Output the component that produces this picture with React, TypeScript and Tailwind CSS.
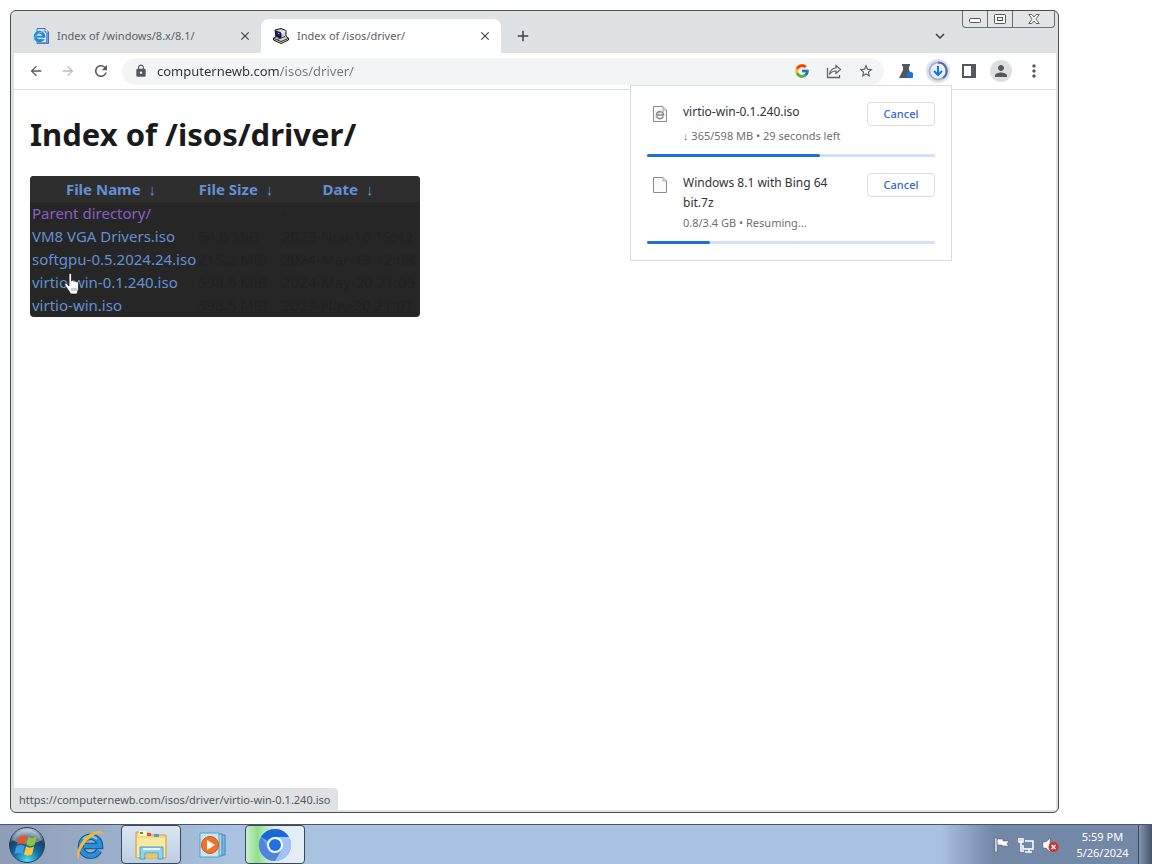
import type { ReactNode } from "react";
import { FcGoogle } from "react-icons/fc";
import {
  MdAdd,
  MdArrowBack,
  MdArrowForward,
  MdClose,
  MdExpandMore,
  MdLock,
  MdMoreVert,
  MdPerson,
  MdRefresh,
  MdStarBorder,
} from "react-icons/md";

const files = [
  { name: "Parent directory/", size: "-", date: "-", visited: true },
  { name: "VM8 VGA Drivers.iso", size: "54.6 MiB", date: "2023-Nov-16 19:42" },
  { name: "softgpu-0.5.2024.24.iso", size: "215.2 MiB", date: "2024-Mar-13 12:08" },
  { name: "virtio-win-0.1.240.iso", size: "598.5 MiB", date: "2024-May-20 21:05" },
  { name: "virtio-win.iso", size: "598.5 MiB", date: "2023-Nov-20 21:07" },
];

function SiteIcon() {
  return (
    <svg viewBox="0 0 16 16" className="size-4 shrink-0">
      <path d="M4 .5h8l3.500 3.500v11.500H4z" fill="#cfdff5" stroke="#4a6fb5" />
      <path d="M12 .5V4h3.500" fill="#fff" stroke="#4a6fb5" />
      <path d="M14 5v10H5" fill="none" stroke="#5c7fc4" strokeWidth="1.500" />
      <circle cx="6.500" cy="8.500" r="4.300" fill="#bfe6fb" stroke="#2487d0" strokeWidth="3" />
      <path d="M3.500 8.700h7" stroke="#2487d0" strokeWidth="1.800" />
      <path d="M8.500 10.500h4" stroke="#d8ecfa" strokeWidth="1.300" />
      <path d="M1 13C-.5 10 6 3 11 4" fill="none" stroke="#7cc3ee" />
    </svg>
  );
}

function ComputerIcon() {
  return (
    <svg viewBox="0 0 16 16" className="size-4 shrink-0">
      <path d="M2 2l6-1.500 5 2v6l2.500 1.500v2L8 15.500.500 12v-2L3 9z" fill="#d4d4d4" stroke="#111" />
      <path d="M3 3l5 2v5L3 8.500z" fill="#15158c" stroke="#111" />
      <path d="M8 5l4.500-2" stroke="#fff" />
      <path d="M1 10.500l7 3 7-3M4 11.500l8-3" fill="none" stroke="#333" />
      <path d="M4.500 5l2 1" stroke="#7db8ff" />
    </svg>
  );
}

function ShareIcon() {
  return (
    <svg viewBox="0 0 16 16" className="size-4" fill="none" stroke="#5f6368">
      <path d="M1.500 5v9.500h12V12" strokeWidth="1.300" />
      <path d="M10 2.500l4.500 4-4.500 4V8C7 8 5 9 3.500 11.500 4 8 6 5.300 10 5z" strokeWidth="1.200" />
    </svg>
  );
}

function FlaskIcon() {
  return (
    <svg viewBox="0 0 16 16" className="size-4">
      <path d="M4 1h8v2h-1v4l4 8H1l4-8V3H4z" fill="#54575c" />
      <circle cx="12" cy="12" r="3.200" fill="#1a73e8" />
    </svg>
  );
}

function DownloadIcon() {
  return (
    <svg viewBox="0 0 24 24" className="size-6">
      <circle cx="12" cy="12" r="8.500" fill="#e6eefc" stroke="#a9b3c8" strokeWidth="2" />
      <path d="M12 3.500A8.500 8.500 0 0 1 17 19" fill="none" stroke="#4a6ea8" strokeWidth="2" />
      <path d="M12 7v9M8 12l4 4 4-4" fill="none" stroke="#1a73e8" strokeWidth="2" />
    </svg>
  );
}

function FileIcon({ disc }: { disc?: boolean }) {
  return (
    <svg viewBox="0 0 14 16" className="h-4 w-[14px] shrink-0">
      <path d="M.5.5h9.500l3.500 3.500v11.500H.5z" fill="#fafafa" stroke="#8a8a8a" />
      <path d="M10 .5V4h3.500" fill="#ddd" stroke="#aaa" />
      {disc && (
        <>
          <path d="M10.300 10.500A3.600 3.600 0 1 1 10.600 9H4" fill="none" stroke="#888" strokeWidth="1.500" />
          <path d="M3 12c0-3 4-7 8-7" fill="none" stroke="#aaa" />
        </>
      )}
    </svg>
  );
}

function StartOrb() {
  return (
    <svg viewBox="0 0 38 38" className="size-[38px]">
      <defs>
        <radialGradient id="orb" cx=".5" cy=".95" r=".9">
          <stop offset="0" stopColor="#4fdcf5" />
          <stop offset=".4" stopColor="#1673a8" />
          <stop offset=".75" stopColor="#1d3f63" />
          <stop offset="1" stopColor="#a9bccb" />
        </radialGradient>
      </defs>
      <circle cx="19" cy="19" r="17.500" fill="url(#orb)" stroke="#26425d" />
      <path d="M4 14a16 16 0 0 1 30 0c-8 5-20 5-30 0z" fill="#fff" opacity=".35" />
      <path d="M11 11c3-2 5-2 8-.5l-2 8c-3-1.500-5-1.500-8 0z" fill="#e8552b" />
      <path d="M20.500 11c3 1.500 5 1.500 8 0l-2 8c-3 1.500-5 1.500-8 0z" fill="#8cc63f" />
      <path d="M8.500 20c3-1.500 5-1.500 8 0l-2 8c-3-1.500-5-1.500-8 0z" fill="#3b9fe6" />
      <path d="M18 20.500c3 1.500 5 1.500 8 0l-2 8c-3 1.500-5 1.500-8 0z" fill="#fdc82f" />
    </svg>
  );
}

function InternetExplorerIcon() {
  return (
    <svg viewBox="0 0 32 32" className="size-8" fill="none">
      <path d="M25 21.500A9.500 9.500 0 1 1 26 17H10" stroke="#14538f" strokeWidth="6.500" />
      <path d="M25 21.500A9.500 9.500 0 1 1 26 17H10" stroke="#2b8fd6" strokeWidth="4.500" />
      <path d="M9 10a10 10 0 0 1 14 0" stroke="#7ccdf5" strokeWidth="2" />
      <path d="M5 30C-1 26 8 7 20 3c5-2 9-1 9 2-2-2-6-1-10 2C10 13 4 23 5 30z" fill="#f6b92c" />
    </svg>
  );
}

function ExplorerIcon() {
  return (
    <svg viewBox="0 0 34 32" className="h-8 w-[34px]">
      <path d="M2 3h11l2 3h17v23H2z" fill="#f2d77c" stroke="#c8a545" />
      <path d="M5 2h8v5H5z" fill="#fff5c8" />
      <path d="M6 3h3v2H6z" fill="#3f9f45" />
      <path d="M13 4h4v3h-4z" fill="#dc5136" />
      <path d="M20 5h5v3h-5z" fill="#589bd6" />
      <path d="M3 9h28v19H3z" fill="#fae99e" />
      <path d="M6 18h23v12h-5v-6H11v6H6z" fill="#8ed2f0" stroke="#4a9bd1" />
      <path d="M9 20h17" stroke="#e3f6ff" strokeWidth="2" />
      <path d="M12 25h11v4H12z" fill="#f1c453" />
    </svg>
  );
}

function MediaPlayerIcon() {
  return (
    <svg viewBox="0 0 28 26" className="h-[26px] w-7">
      <path d="M8 3h18v20H8z" fill="#7ab9dd" stroke="#4286b4" />
      <path d="M5 2h18v22H5z" fill="#a5d6ee" stroke="#4286b4" />
      <path d="M1 1h19v24H1z" fill="#c4e6f5" stroke="#5a9ec9" />
      <circle cx="11" cy="13" r="8.500" fill="#f27321" stroke="#d3550f" />
      <path d="M8 8l8 5-8 5z" fill="#fff" />
    </svg>
  );
}

function ChromiumIcon() {
  return (
    <svg viewBox="0 0 34 34" className="size-[34px]">
      <circle cx="17" cy="17" r="16" fill="#669df6" />
      <path d="M17 17L3.100 9A16 16 0 0 1 30.900 9z" fill="#1a67d8" />
      <path d="M17 9h13.900A16 16 0 0 1 17 33l7-12z" fill="#a3c2f8" />
      <path d="M3.100 9A16 16 0 0 0 17 33l7-12-14-1z" fill="#4f86dc" />
      <circle cx="17" cy="17" r="8" fill="#fff" />
      <circle cx="17" cy="17" r="6" fill="#1f70e6" />
    </svg>
  );
}

function HandCursor() {
  return (
    <svg viewBox="0 0 17 22" className="pointer-events-none absolute left-[64px] top-[273px] h-[22px] w-[17px]">
      <path
        d="M5 1.500c0-1.300 2.500-1.300 2.500 0V8c.5-1 2.200-.8 2.400.4.600-.8 2.200-.6 2.400.6.700-.7 2.200-.2 2.200 1V15c0 2-1 3-1.500 6H6.500C6 18 1 14 .7 11.500c-.2-1.500 1.600-1.700 2.500-.5L5 13z"
        fill="#fff"
        stroke="#222"
        strokeWidth=".8"
      />
      <path d="M8 15v3M10 15v3M12 15v3" stroke="#555" strokeWidth=".6" />
    </svg>
  );
}

function Tab({ icon, title, active }: { icon: ReactNode; title: string; active?: boolean }) {
  return (
    <div
      className={
        active
          ? "flex h-[34px] w-60 items-center gap-2 rounded-t-lg bg-white pl-3 pr-2"
          : "flex h-[34px] w-60 items-center gap-2 pl-3 pr-2"
      }
    >
      {icon}
      <span className="flex-1 truncate text-[11px] text-[#5c6065]">{title}</span>
      <button aria-label={`Close ${title}`} className="flex size-4 items-center justify-center text-[#3c4043]">
        <MdClose size={14} />
      </button>
    </div>
  );
}

type DownloadProps = {
  icon: ReactNode;
  name: string;
  status: string;
  percent: number;
};

function Download({ icon, name, status, percent }: DownloadProps) {
  return (
    <div>
      <div className="flex items-start">
        <div className="w-9 pl-[6px] pt-1">{icon}</div>
        <div className="w-40">
          <p className="text-[12px] leading-5 text-[#303236]">{name}</p>
        </div>
        <button className="ml-auto h-6 w-[68px] rounded border border-[#dadce0] text-[11px] font-medium text-[#3568cf]">
          Cancel
        </button>
      </div>
      <p className="pl-9 text-[11px] leading-5 text-[#6b6f74]">{status}</p>
      <div className="mt-2 h-[3px] rounded-full bg-[#d3e0fa]">
        <div className="h-full rounded-full bg-[#1f6fd6]" style={{ width: `${percent}%` }} />
      </div>
    </div>
  );
}

function WindowControls() {
  return (
    <div className="absolute right-[3px] top-0 flex h-[17px] w-[93px] divide-x divide-[#6b6e72] rounded-b border border-t-0 border-[#6b6e72] bg-[#e3e5e8]">
      <button aria-label="Minimize" className="flex w-[25px] items-center justify-center">
        <svg viewBox="0 0 12 10" className="h-[10px] w-3">
          <rect x=".5" y="4.500" width="11" height="4" rx="1" fill="#fff" stroke="#555" />
        </svg>
      </button>
      <button aria-label="Restore" className="flex w-[25px] items-center justify-center">
        <svg viewBox="0 0 12 10" className="h-[10px] w-3" fill="#fff" stroke="#555">
          <rect x=".5" y=".5" width="11" height="9" rx="1" />
          <rect x="3.500" y="3.500" width="5" height="3" />
        </svg>
      </button>
      <button aria-label="Close" className="flex flex-1 items-center justify-center">
        <svg viewBox="0 0 12 10" className="h-[10px] w-3">
          <path d="M.8.5h3L6 3l2.200-2.500h3L7.800 5l3.400 4.500h-3L6 7 3.800 9.500h-3L4.200 5z" fill="#fff" stroke="#555" strokeWidth=".9" />
        </svg>
      </button>
    </div>
  );
}

function Toolbar() {
  return (
    <div className="flex h-[37px] items-center border-b border-[#dadce0] bg-white pl-[14px] pr-3 text-[#54575c]">
      <div className="flex items-center gap-4">
        <button aria-label="Back">
          <MdArrowBack size={20} className="w-4" />
        </button>
        <button aria-label="Forward" className="text-[#babcbe]">
          <MdArrowForward size={20} className="w-4" />
        </button>
        <button aria-label="Reload">
          <MdRefresh size={20} className="w-[18px]" />
        </button>
      </div>
      <div className="ml-3 flex h-[27px] flex-1 items-center rounded-full bg-[#f3f4f5] pl-3 pr-[10px]">
        <MdLock size={14} />
        <label htmlFor="address" className="sr-only">
          Address
        </label>
        {/* host is darker than the path */}
        <input
          id="address"
          defaultValue="computernewb.com/isos/driver/"
          className="ml-[9px] block min-w-0 flex-1 bg-linear-to-r from-[#303337] from-[122px] to-[#74787d] to-[122px] bg-clip-text text-[13px] leading-6 text-transparent outline-none"
        />
        <div className="flex items-center gap-4">
          <button aria-label="Search with Google">
            <FcGoogle size={16} />
          </button>
          <button aria-label="Share">
            <ShareIcon />
          </button>
          <button aria-label="Bookmark">
            <MdStarBorder size={18} className="w-4" />
          </button>
        </div>
      </div>
      <div className="ml-[14px] flex items-center gap-3">
        <button aria-label="Labs">
          <FlaskIcon />
        </button>
        <button aria-label="Downloads" className="rounded-full bg-[#dfe1e5]">
          <DownloadIcon />
        </button>
        <button aria-label="Side panel" className="mr-[2px]">
          <svg viewBox="0 0 14 14" className="size-[14px]">
            <path d="M1 1h12v12H1z" fill="#fff" stroke="#54575c" strokeWidth="2" />
            <path d="M9 1h4v12H9z" fill="#54575c" />
          </svg>
        </button>
        <button aria-label="Profile" className="flex size-[22px] items-center justify-center rounded-full bg-[#dcdee2]">
          <MdPerson size={18} />
        </button>
        <button aria-label="Menu">
          <MdMoreVert size={20} />
        </button>
      </div>
    </div>
  );
}

function Listing() {
  return (
    <main className="flex-1 pl-4 pt-6">
      <h1 className="text-[31px] font-bold leading-10 text-[#1a1a1a]">Index of /isos/driver/</h1>
      <table className="mt-[22px] w-[390px] table-fixed overflow-hidden rounded bg-[#262626] text-[15px] leading-[23px] text-[#222222]">
        <colgroup>
          <col className="w-[166px]" />
          <col className="w-[84px]" />
          <col />
        </colgroup>
        <thead>
          <tr className="h-[26px] bg-[#2e2e2e] text-[#6391d4]">
            <th className="p-0 pr-1 font-bold">
              <a href="#name">File Name</a> <a href="#name-desc" className="ml-1 font-normal">↓</a>
            </th>
            <th className="p-0 pr-1 font-bold">
              <a href="#size">File Size</a> <a href="#size-desc" className="ml-1 font-normal">↓</a>
            </th>
            <th className="p-0 pr-1 font-bold">
              <a href="#date">Date</a> <a href="#date-desc" className="ml-1 font-normal">↓</a>
            </th>
          </tr>
        </thead>
        <tbody>
          {files.map((file) => (
            <tr key={file.name} className="whitespace-nowrap">
              <td className="p-0 pl-[2px]">
                <a href="#file" className={file.visited ? "text-[#8660c4]" : "text-[#6391d4]"}>
                  {file.name}
                </a>
              </td>
              <td className="p-0 pl-[2px]">{file.size}</td>
              <td className="p-0 pl-[2px]">{file.date}</td>
            </tr>
          ))}
        </tbody>
      </table>
    </main>
  );
}

function Browser() {
  return (
    <div className="relative flex flex-1 flex-col rounded-md border border-[#4a4c50] bg-[#dfe2e5] pb-[2px] pl-[3px] pr-[2px]">
      <WindowControls />
      <div className="flex h-[42px] items-end pl-[7px]">
        <Tab icon={<SiteIcon />} title="Index of /windows/8.x/8.1/" />
        <Tab icon={<ComputerIcon />} title="Index of /isos/driver/" active />
        <button aria-label="New tab" className="flex h-[34px] w-11 items-center justify-center text-[#3c4043]">
          <MdAdd size={18} />
        </button>
        <button aria-label="Search tabs" className="ml-auto mr-[107px] flex h-[34px] items-center text-[#3c4043]">
          <MdExpandMore size={18} />
        </button>
      </div>
      <Toolbar />
      <div className="flex flex-1 flex-col bg-white">
        <Listing />
        <div className="self-start rounded-tr bg-[#dfe1e3] pb-[2px] pl-[5px] pr-2 pt-1 text-[11px] leading-4 text-[#54585d]">
          https://computernewb.com/isos/driver/virtio-win-0.1.240.iso
        </div>
      </div>
      <section
        aria-label="Downloads"
        className="absolute right-[106px] top-[74px] flex w-[322px] flex-col gap-4 border border-[#dadce0] bg-white p-4"
      >
        <Download
          icon={<FileIcon disc />}
          name="virtio-win-0.1.240.iso"
          status="↓ 365/598 MB • 29 seconds left"
          percent={60}
        />
        <Download
          icon={<FileIcon />}
          name="Windows 8.1 with Bing 64 bit.7z"
          status="0.8/3.4 GB • Resuming..."
          percent={22}
        />
      </section>
    </div>
  );
}

function Taskbar() {
  return (
    <footer className="flex h-10 items-stretch border-t border-[#4c5668] bg-linear-to-r from-[#8d9db6] via-[#a9c2e0] via-20% to-[#a9c2e0]">
      <button aria-label="Start" className="ml-2 flex w-[38px] items-center justify-center">
        <StartOrb />
      </button>
      <div className="ml-[14px] flex gap-[2px]">
        <button aria-label="Internet Explorer" className="flex w-[59px] items-center justify-center">
          <InternetExplorerIcon />
        </button>
        <button
          aria-label="Windows Explorer"
          className="flex w-[60px] items-center justify-center rounded border border-[#3b485c] bg-linear-to-b from-[#dce6f2] to-[#bdcde1]"
        >
          <ExplorerIcon />
        </button>
        <button aria-label="Windows Media Player" className="flex w-[60px] items-center justify-center">
          <MediaPlayerIcon />
        </button>
        <button
          aria-label="Chromium"
          className="flex w-[60px] items-center justify-center rounded border border-[#3b485c] bg-linear-to-r from-[#c9edcb] via-[#8fe08c] via-20% to-[#e4ecf6] to-50%"
        >
          <ChromiumIcon />
        </button>
      </div>
      <div className="ml-auto flex w-[212px] items-center justify-end bg-linear-to-r from-[#a9c2e0] to-[#7388a6] to-25%">
        <div className="mr-2 flex items-center gap-2">
          <button aria-label="Action Center">
            <svg viewBox="0 0 16 16" className="size-4" fill="#fff" stroke="#3f4c60" strokeWidth=".5">
              <path d="M1 1h2v14H1zM3 2h6v2h6l-2 3 2 2H8V8H3z" />
            </svg>
          </button>
          <button aria-label="Network">
            <svg viewBox="0 0 16 16" className="size-4" fill="none" stroke="#fff" strokeWidth="1.500">
              <path d="M7 4h8v8H5V8M7 15h7M11 12v3" />
              <path d="M1 1v4h4V1M3 1v4M3 5v9h3" />
            </svg>
          </button>
          <button aria-label="Volume muted">
            <svg viewBox="0 0 17 16" className="h-4 w-[17px]">
              <path d="M1 5h3l4-4v14l-4-4H1z" fill="#fff" stroke="#45536a" strokeWidth=".5" />
              <circle cx="11.500" cy="10" r="5" fill="#d92f27" />
              <path d="M9.500 8l4 4M13.500 8l-4 4" stroke="#fff" strokeWidth="1.500" />
            </svg>
          </button>
        </div>
        <div className="w-[71px] text-center text-[11px] leading-4 text-white">
          <p>5:59 PM</p>
          <p>5/26/2024</p>
        </div>
        <button
          aria-label="Show desktop"
          className="h-full w-[14px] border-l border-[#3d4a5e] bg-linear-to-r from-[#8495ad] to-[#45546b]"
        />
      </div>
    </footer>
  );
}

export default function App() {
  return (
    <div className="flex h-screen flex-col bg-white font-['Noto_Sans',sans-serif]">
      <div className="relative flex flex-1 pb-[11px] pl-[10px] pr-[93px] pt-[10px]">
        <Browser />
        <HandCursor />
      </div>
      <Taskbar />
    </div>
  );
}
